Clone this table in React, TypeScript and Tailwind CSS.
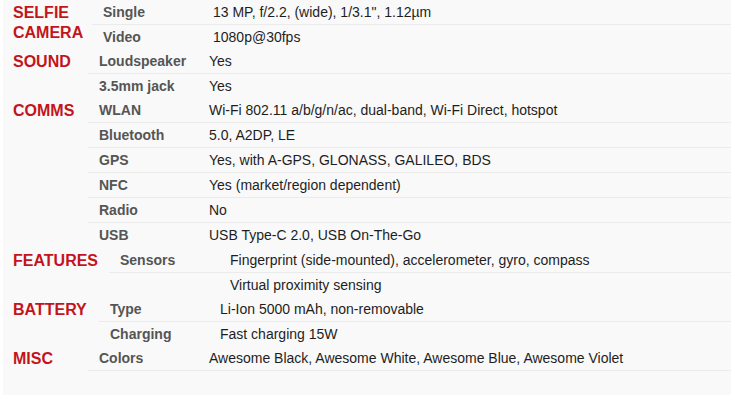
type Row = { label: string; value: string; line?: boolean };

type Section = { title: string[]; width: string; gap?: string; rows: Row[] };

const sections: Section[] = [
  {
    title: ['SELFIE', 'CAMERA'],
    width: 'w-[89px]',
    rows: [
      { label: 'Single', value: '13 MP, f/2.2, (wide), 1/3.1", 1.12µm', line: true },
      { label: 'Video', value: '1080p@30fps' },
    ],
  },
  {
    title: ['SOUND'],
    width: 'w-[85px]',
    rows: [
      { label: 'Loudspeaker', value: 'Yes', line: true },
      { label: '3.5mm jack', value: 'Yes' },
    ],
  },
  {
    title: ['COMMS'],
    width: 'w-[85px]',
    rows: [
      { label: 'WLAN', value: 'Wi-Fi 802.11 a/b/g/n/ac, dual-band, Wi-Fi Direct, hotspot', line: true },
      { label: 'Bluetooth', value: '5.0, A2DP, LE', line: true },
      { label: 'GPS', value: 'Yes, with A-GPS, GLONASS, GALILEO, BDS', line: true },
      { label: 'NFC', value: 'Yes (market/region dependent)', line: true },
      { label: 'Radio', value: 'No', line: true },
      { label: 'USB', value: 'USB Type-C 2.0, USB On-The-Go' },
    ],
  },
  {
    title: ['FEATURES'],
    width: 'w-[106px]',
    gap: 'mt-[1px]',
    rows: [
      { label: 'Sensors', value: 'Fingerprint (side-mounted), accelerometer, gyro, compass', line: true },
      { label: '', value: 'Virtual proximity sensing' },
    ],
  },
  {
    title: ['BATTERY'],
    width: 'w-[96px]',
    rows: [
      { label: 'Type', value: 'Li-Ion 5000 mAh, non-removable', line: true },
      { label: 'Charging', value: 'Fast charging 15W' },
    ],
  },
  {
    title: ['MISC'],
    width: 'w-[85px]',
    rows: [{ label: 'Colors', value: 'Awesome Black, Awesome White, Awesome Blue, Awesome Violet', line: true }],
  },
];

function SpecSection({ section }: { section: Section }) {
  return (
    <div className={`flex ${section.gap ?? ''}`}>
      <div
        className={`${section.width} shrink-0 pl-[10px] pt-[3px] text-[16px] font-bold leading-[20px] text-[#c4141b]`}
      >
        {section.title.map((t) => (
          <div key={t}>{t}</div>
        ))}
      </div>
      <div className="flex flex-1 flex-col">
        {section.rows.map((row, i) => (
          <div
            key={i}
            className={`flex h-[24px] items-center ${row.line ? 'box-content border-b border-[#ebebeb]' : ''}`}
          >
            <div className="w-[111px] shrink-0 pl-[11px] text-[14px] font-bold text-[#555555]">{row.label}</div>
            <div className="pl-[10px] text-[14px] text-[#1e1e1e]">{row.value}</div>
          </div>
        ))}
      </div>
    </div>
  );
}

export default function App() {
  return (
    <div className="h-[404px] w-[735px] bg-white pl-[3px] font-['Liberation_Sans',Arial,sans-serif]">
      <div className="h-[395px] w-[728px] bg-[#f9f9f9]">
        {sections.map((s) => (
          <SpecSection key={s.title.join(' ')} section={s} />
        ))}
      </div>
    </div>
  );
}
